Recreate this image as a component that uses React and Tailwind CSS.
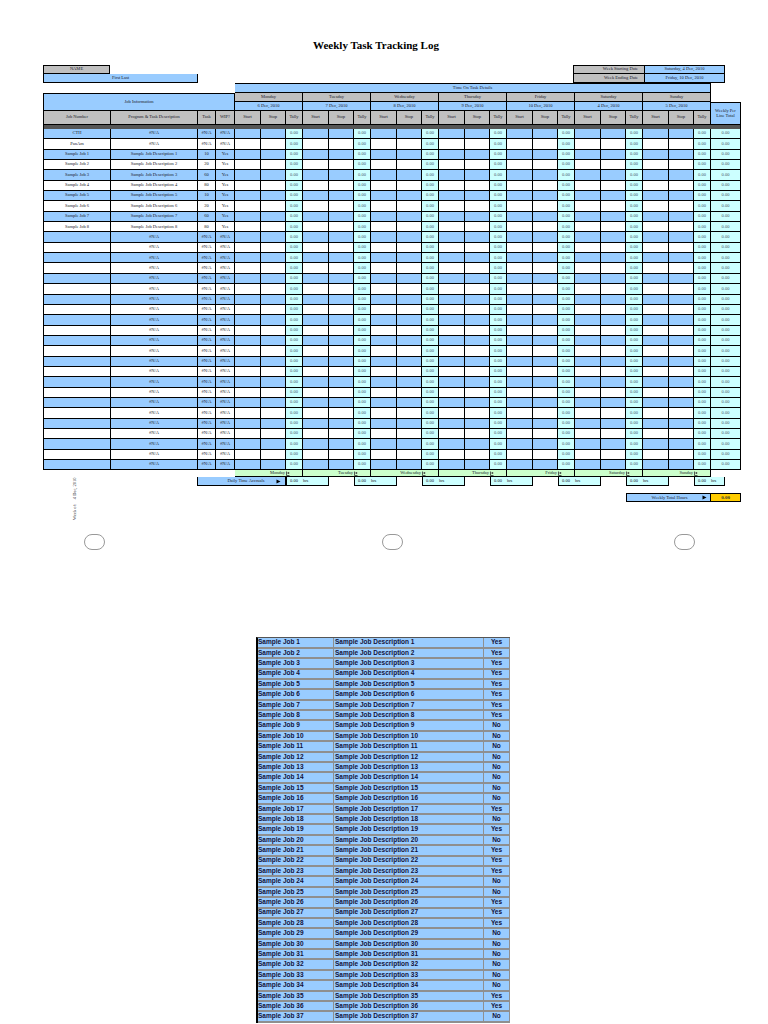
import React from "react";

const days = [
  { name: "Monday", date: "6 Dec, 2010" },
  { name: "Tuesday", date: "7 Dec, 2010" },
  { name: "Wednesday", date: "8 Dec, 2010" },
  { name: "Thursday", date: "9 Dec, 2010" },
  { name: "Friday", date: "10 Dec, 2010" },
  { name: "Saturday", date: "4 Dec, 2010" },
  { name: "Sunday", date: "5 Dec, 2010" },
];

const taskNums = ["10", "20", "60", "80", "10", "20", "60", "80"];

const jobRows = [
  { job: "CTH", desc: "#N/A", task: "#N/A", wip: "#N/A" },
  { job: "PanAm", desc: "#N/A", task: "#N/A", wip: "#N/A" },
  ...taskNums.map((t, i) => ({
    job: `Sample Job ${i + 1}`,
    desc: `Sample Job Description ${i + 1}`,
    task: t,
    wip: "Yes",
  })),
  ...Array.from({ length: 23 }, () => ({ job: "", desc: "#N/A", task: "#N/A", wip: "#N/A" })),
];

const wipList = "YYYYYYYYNNNNNNNNYNYNYYYNNYYYNNNNNNYYN";

const serif = "[font-family:'Liberation_Serif','Times_New_Roman',serif]";

function Arrow() {
  return (
    <svg width="5" height="5" viewBox="0 0 5 5" className="shrink-0">
      <path d="M0.5 0.5 L4.5 2.5 L0.5 4.5 Z" fill="#000" />
    </svg>
  );
}

function DropMark() {
  return (
    <svg width="4" height="5" viewBox="0 0 4 5" className="shrink-0">
      <path d="M0.5 0.5 V4.5 H3.5" stroke="#333" strokeWidth="0.8" fill="none" />
      <rect x="1.6" y="1.2" width="1.6" height="1.6" fill="#333" />
    </svg>
  );
}

function DataRow({ row, i }) {
  const bg = i % 2 === 0 ? "bg-[#99ccff]" : "bg-white";
  return (
    <div className={`flex h-[10.35px] border-b border-black ${bg}`}>
      <div className="w-[68px] shrink-0 border-x border-black flex items-center justify-center">{row.job}</div>
      <div className="w-[87px] shrink-0 border-r border-black flex items-center justify-center">{row.desc}</div>
      <div className="w-[18px] shrink-0 border-r border-black flex items-center justify-center">{row.task}</div>
      <div className="w-[19px] shrink-0 border-r border-black flex items-center justify-center">{row.wip}</div>
      {days.map((d) => (
        <React.Fragment key={d.name}>
          <div className="w-[26px] shrink-0 border-r border-black" />
          <div className="w-[25px] shrink-0 border-r border-black" />
          <div className="w-[17px] shrink-0 border-r border-black bg-[#ccffff] text-[#4a5a6a] flex items-center justify-center">
            0.00
          </div>
        </React.Fragment>
      ))}
      <div className="w-[30px] shrink-0 border-r border-black bg-[#ccffff] text-[#4a5a6a] flex items-center justify-center">
        0.00
      </div>
    </div>
  );
}

function MainSheet() {
  return (
    <div className={`${serif} text-[4.5px] leading-none text-[#1a1a2a]`}>
      {/* title */}
      <div className="pt-[38px] h-[52px] w-[752px] flex justify-center">
        <div className="text-[11px] font-bold leading-[14px] text-black">Weekly Task Tracking Log</div>
      </div>

      {/* name + dates */}
      <div className="mt-[13px] ml-[43px] w-[682px] flex justify-between">
        <div className="flex flex-col">
          <div className="w-[67px] h-[9px] bg-[#c0c0c0] border border-black flex items-center justify-center">NAME</div>
          <div className="w-[155px] h-[9px] bg-[#99ccff] border border-t-0 border-black flex items-center justify-center">
            First Last
          </div>
        </div>
        <div className="flex flex-col">
          <div className="flex h-[9px]">
            <div className="w-[72px] bg-[#c0c0c0] border border-black flex items-center justify-end pr-[6px]">Week Starting Date</div>
            <div className="w-[80px] bg-[#99ccff] border border-l-0 border-black flex items-center justify-center">Saturday, 4 Dec, 2010</div>
          </div>
          <div className="flex h-[9px]">
            <div className="w-[72px] bg-[#c0c0c0] border border-t-0 border-black flex items-center justify-end pr-[6px]">Week Ending Date</div>
            <div className="w-[80px] bg-[#99ccff] border border-l-0 border-t-0 border-black flex items-center justify-center">Friday, 10 Dec, 2010</div>
          </div>
        </div>
      </div>

      {/* header */}
      <div className="ml-[43px] flex">
        <div className="w-[192px] shrink-0 flex flex-col">
          <div className="h-[10px]" />
          <div className="h-[18px] bg-[#99ccff] border border-black flex items-center justify-center">Job Information</div>
          <div className="h-[14px] flex bg-[#c0c0c0]">
            <div className="w-[68px] border-x border-b border-black flex items-center justify-center">Job Number</div>
            <div className="w-[87px] border-r border-b border-black flex items-center justify-center">Program &amp; Task Description</div>
            <div className="w-[18px] border-r border-b border-black flex items-center justify-center">Task</div>
            <div className="w-[19px] border-r border-b border-black flex items-center justify-center">WIP?</div>
          </div>
        </div>
        <div className="w-[476px] shrink-0 flex flex-col">
          <div className="h-[10px] bg-[#99ccff] border-t border-r border-b border-black flex items-center justify-center">
            Time On Task Details
          </div>
          <div className="h-[9px] flex">
            {days.map((d) => (
              <div key={d.name} className="w-[68px] bg-[#c0c0c0] border-r border-b border-black flex items-center justify-center">
                {d.name}
              </div>
            ))}
          </div>
          <div className="h-[9px] flex">
            {days.map((d) => (
              <div key={d.name} className="w-[68px] bg-[#99ccff] border-r border-b border-black flex items-center justify-center">
                {d.date}
              </div>
            ))}
          </div>
          <div className="h-[14px] flex bg-[#c0c0c0]">
            {days.map((d) => (
              <React.Fragment key={d.name}>
                <div className="w-[26px] border-r border-b border-black flex items-center justify-center">Start</div>
                <div className="w-[25px] border-r border-b border-black flex items-center justify-center">Stop</div>
                <div className="w-[17px] border-r border-b border-black flex items-center justify-center">Tally</div>
              </React.Fragment>
            ))}
          </div>
        </div>
        <div className="w-[30px] shrink-0 flex flex-col">
          <div className="h-[19px]" />
          <div className="h-[23px] bg-[#99ccff] border-t border-r border-b border-black flex items-center justify-center text-center">
            Weekly Per
            <br />
            Line Total
          </div>
        </div>
      </div>
      <div className="ml-[43px] w-[698px] h-[4px] bg-[#555555] border-x border-black" />

      {/* rows */}
      <div className="ml-[43px] w-[698px]">
        {jobRows.map((row, i) => (
          <DataRow key={i} row={row} i={i} />
        ))}
      </div>

      {/* totals */}
      <div className="flex">
        <div className="ml-[73px] w-[8px] pt-[9px]">
          <div className="h-[41px] [writing-mode:vertical-rl] rotate-180 whitespace-pre text-[4.5px]">Week of:    4 Dec, 2010</div>
        </div>
        <div className="ml-[116px] flex flex-col">
          <div className="ml-[38px] h-[7px] flex">
            {days.map((d) => (
              <div key={d.name} className="w-[68px] bg-[#ccffcc] border-r border-b border-black flex items-center">
                <div className="w-[51px] text-right pr-[1px]">{d.name}</div>
                <DropMark />
              </div>
            ))}
          </div>
          <div className="h-[9px] flex">
            <div className="w-[89px] bg-[#99ccff] border border-t-0 border-black flex items-center pl-[18px] pr-[4px]">
              <div className="flex-1 text-center">Daily Time Accruals</div>
              <Arrow />
            </div>
            {days.map((d, i) => (
              <React.Fragment key={d.name}>
                <div
                  className={`${i === 6 ? "w-[31px]" : "w-[43px]"} bg-[#ccffff] border border-t-0 border-black flex items-center pl-[3px] gap-[5px]`}
                >
                  <span>0.00</span>
                  <span>hrs</span>
                </div>
                {i < 6 && <div className="w-[25px]" />}
              </React.Fragment>
            ))}
          </div>
          <div className="mt-[7px] ml-[429px] h-[9px] flex">
            <div className="w-[85px] bg-[#99ccff] border border-black flex items-center pr-[3px]">
              <div className="flex-1 text-center pl-[10px]">Weekly Total Hours</div>
              <Arrow />
            </div>
            <div className="w-[30px] bg-[#ffcc00] border border-l-0 border-black flex items-center justify-center font-bold text-[5px] text-[#333]">
              0.00
            </div>
          </div>
        </div>
      </div>

      {/* punch holes */}
      <div className="mt-[14px] h-[16px] flex">
        <div className="ml-[84px] w-[21px] h-[16px] rounded-full border border-[#999]" />
        <div className="ml-[277px] w-[21px] h-[16px] rounded-full border border-[#999]" />
        <div className="ml-[271px] w-[21px] h-[16px] rounded-full border border-[#999]" />
      </div>
    </div>
  );
}

function JobList() {
  return (
    <div className="mt-[87px] ml-[256px] w-[254px] border-t border-[#555] border-l-2 border-l-black [font-family:'Liberation_Sans',Arial,sans-serif] text-[6.5px] font-bold leading-none text-[#12123a]">
      {wipList.split("").map((w, i) => (
        <div key={i} className="flex h-[10.4px] bg-[#99ccff] border-b-2 border-[#8f8f8f]">
          <div className="w-[76px] border-r border-[#8f8f8f] flex items-center whitespace-nowrap overflow-hidden">
            Sample Job {i + 1}
          </div>
          <div className="w-[150px] border-r border-[#8f8f8f] flex items-center pl-[1px] whitespace-nowrap">
            Sample Job Description {i + 1}
          </div>
          <div className="w-[26px] border-r border-[#8f8f8f] flex items-center justify-center">{w === "Y" ? "Yes" : "No"}</div>
        </div>
      ))}
    </div>
  );
}

export default function App() {
  return (
    <div className="w-[768px] h-[1024px] overflow-hidden bg-white">
      <MainSheet />
      <JobList />
    </div>
  );
}
